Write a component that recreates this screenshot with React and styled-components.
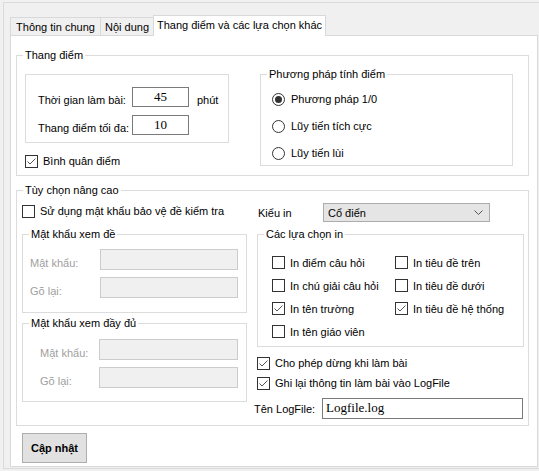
import React from 'react';
import styled, { createGlobalStyle } from 'styled-components';

const GlobalStyle = createGlobalStyle`
  html, body {
    margin: 0;
    padding: 0;
    background: #f0f0f0;
  }
  body {
    font-family: "Liberation Sans", Arial, sans-serif;
    font-size: 11px;
    color: #000;
  }
  * { box-sizing: border-box; }
`;

const CheckIcon = ({ checked }) => (
  <svg width="13" height="13" viewBox="0 0 13 13">
    <rect x="0.5" y="0.5" width="12" height="12" fill="#fff" stroke="#333" />
    {checked && <path d="M2.5 6.5 L5 9 L10.5 3.5" fill="none" stroke="#555" strokeWidth="1" />}
  </svg>
);

const RadioIcon = ({ checked }) => (
  <svg width="13" height="13" viewBox="0 0 13 13">
    <circle cx="6.5" cy="6.5" r="6" fill="#fff" stroke="#333" />
    {checked && <circle cx="6.5" cy="6.5" r="3.5" fill="#333" />}
  </svg>
);

const Chevron = () => (
  <svg width="9" height="5" viewBox="0 0 9 5">
    <path d="M0.5 0.5 L4.5 4.5 L8.5 0.5" fill="none" stroke="#555" />
  </svg>
);

export default function App() {
  return (
    <>
      <GlobalStyle />
      <Frame>
        <TabStrip>
          <Tab $width={91}>Thông tin chung</Tab>
          <Tab $width={53} $noLeft>Nội dung</Tab>
          <ActiveTab>Thang điểm và các lựa chọn khác</ActiveTab>
        </TabStrip>
        <Panel>
          <Group $width={513} $height={128} $mt={12} $ml={5}>
            <Legend>Thang điểm</Legend>
            <Row>
              <Column $ml={8} $mt={12}>
                <InnerBox>
                  <FieldRow>
                    <FieldLabel $width={94}>Thời gian làm bài:</FieldLabel>
                    <NumberInput>45</NumberInput>
                    <Unit>phút</Unit>
                  </FieldRow>
                  <FieldRow>
                    <FieldLabel $width={94}>Thang điểm tối đa:</FieldLabel>
                    <NumberInput>10</NumberInput>
                  </FieldRow>
                </InnerBox>
                <CheckRow $mt={8}>
                  <CheckIcon checked />
                  <span>Bình quân điểm</span>
                </CheckRow>
              </Column>
              <Group $width={253} $height={99} $mt={5} $ml={31}>
                <Legend>Phương pháp tính điểm</Legend>
                <RadioList>
                  <RadioRow>
                    <RadioIcon checked />
                    <span>Phương pháp 1/0</span>
                  </RadioRow>
                  <RadioRow>
                    <RadioIcon />
                    <span>Lũy tiến tích cực</span>
                  </RadioRow>
                  <RadioRow>
                    <RadioIcon />
                    <span>Lũy tiến lùi</span>
                  </RadioRow>
                </RadioList>
              </Group>
            </Row>
          </Group>

          <Group $width={513} $height={243} $mt={7} $ml={5}>
            <Legend>Tùy chọn nâng cao</Legend>
            <Row>
              <Column $ml={5} $width={225}>
                <CheckRow $mt={4}>
                  <CheckIcon />
                  <span>Sử dụng mật khẩu bảo vệ đề kiểm tra</span>
                </CheckRow>
                <Group $width={225} $height={86} $mt={6}>
                  <Legend>Mật khẩu xem đề</Legend>
                  <PasswordFields $pt={8} $pl={7}>
                    <FieldRow>
                      <FieldLabel $width={70} $disabled>Mật khẩu:</FieldLabel>
                      <DisabledInput $width={138} />
                    </FieldRow>
                    <FieldRow>
                      <FieldLabel $width={70} $disabled>Gõ lại:</FieldLabel>
                      <DisabledInput $width={138} />
                    </FieldRow>
                  </PasswordFields>
                </Group>
                <Group $width={225} $height={86} $mt={3}>
                  <Legend>Mật khẩu xem đầy đủ</Legend>
                  <PasswordFields $pt={9} $pl={17}>
                    <FieldRow>
                      <FieldLabel $width={59} $disabled>Mật khẩu:</FieldLabel>
                      <DisabledInput $width={139} />
                    </FieldRow>
                    <FieldRow>
                      <FieldLabel $width={59} $disabled>Gõ lại:</FieldLabel>
                      <DisabledInput $width={139} />
                    </FieldRow>
                  </PasswordFields>
                </Group>
              </Column>

              <Column $ml={7} $width={269}>
                <PrintStyleRow>
                  <FieldLabel $width={65} $center>Kiểu in</FieldLabel>
                  <Select>
                    <span>Cổ điển</span>
                    <Chevron />
                  </Select>
                </PrintStyleRow>
                <Group $width={267} $height={120} $mt={5} $ml={3}>
                  <Legend>Các lựa chọn in</Legend>
                  <OptionGrid>
                    <OptionItem><CheckIcon /><span>In điểm câu hỏi</span></OptionItem>
                    <OptionItem><CheckIcon /><span>In tiêu đề trên</span></OptionItem>
                    <OptionItem><CheckIcon /><span>In chú giải câu hỏi</span></OptionItem>
                    <OptionItem><CheckIcon /><span>In tiêu đề dưới</span></OptionItem>
                    <OptionItem><CheckIcon checked /><span>In tên trường</span></OptionItem>
                    <OptionItem><CheckIcon checked /><span>In tiêu đề hệ thống</span></OptionItem>
                    <OptionItem><CheckIcon /><span>In tên giáo viên</span></OptionItem>
                  </OptionGrid>
                </Group>
                <CheckRow $mt={6} $ml={3}>
                  <CheckIcon checked />
                  <span>Cho phép dừng khi làm bài</span>
                </CheckRow>
                <CheckRow $ml={3}>
                  <CheckIcon checked />
                  <span>Ghi lại thông tin làm bài vào LogFile</span>
                </CheckRow>
                <LogRow>
                  <FieldLabel $width={68} $center>Tên LogFile:</FieldLabel>
                  <TextInput>Logfile.log</TextInput>
                </LogRow>
              </Column>
            </Row>
          </Group>

          <UpdateButton>Cập nhật</UpdateButton>
        </Panel>
      </Frame>
    </>
  );
}

const Frame = styled.div`
  margin: 2px 0 0 3px;
  height: 467px;
  border-top: 1px solid #dadada;
  border-left: 1px solid #dadada;
  border-bottom: 1px solid #dadada;
  padding: 12px 0 0 6px;
`;

const TabStrip = styled.div`
  display: flex;
  align-items: flex-end;
  height: 20px;
`;

const Tab = styled.div`
  width: ${(p) => p.$width}px;
  height: 18px;
  border: 1px solid #d9d9d9;
  border-bottom: none;
  ${(p) => p.$noLeft && 'border-left: none;'}
  background: #f0f0f0;
  display: flex;
  align-items: center;
  justify-content: center;
  padding-top: 1px;
  white-space: nowrap;
`;

const ActiveTab = styled.div`
  position: relative;
  z-index: 1;
  width: 173px;
  height: 21px;
  margin-left: -1px;
  margin-bottom: -1px;
  border: 1px solid #d9d9d9;
  border-bottom: none;
  background: #fff;
  display: flex;
  align-items: center;
  justify-content: center;
  padding-bottom: 2px;
  white-space: nowrap;
`;

const Panel = styled.div`
  width: 528px;
  height: 432px;
  background: #fff;
  border: 1px solid #d9d9d9;
  display: flex;
  flex-direction: column;
  align-items: flex-start;
`;

const Group = styled.fieldset`
  margin: ${(p) => p.$mt || 0}px 0 0 ${(p) => p.$ml || 0}px;
  padding: 0;
  min-width: 0;
  width: ${(p) => p.$width}px;
  height: ${(p) => p.$height}px;
  border: 1px solid #dcdcdc;
  flex-shrink: 0;
`;

const Legend = styled.legend`
  margin-left: 6px;
  padding: 0 2px;
  font-size: 11px;
  line-height: 14px;
  white-space: nowrap;
`;

const Row = styled.div`
  display: flex;
  align-items: flex-start;
`;

const Column = styled.div`
  display: flex;
  flex-direction: column;
  align-items: flex-start;
  margin: ${(p) => p.$mt || 0}px 0 0 ${(p) => p.$ml || 0}px;
  ${(p) => p.$width && `width: ${p.$width}px;`}
  flex-shrink: 0;
`;

const InnerBox = styled.div`
  width: 204px;
  height: 69px;
  border: 1px solid #dcdcdc;
  padding: 12px 0 0 12px;
  display: flex;
  flex-direction: column;
  gap: 8px;
`;

const FieldRow = styled.div`
  display: flex;
  align-items: flex-end;
  white-space: nowrap;
`;

const FieldLabel = styled.span`
  width: ${(p) => p.$width}px;
  flex-shrink: 0;
  line-height: 14px;
  white-space: nowrap;
  color: ${(p) => (p.$disabled ? '#a0a0a0' : '#000')};
  ${(p) => p.$center && 'align-self: center;'}
`;

const NumberInput = styled.div`
  width: 57px;
  height: 20px;
  border: 1px solid #7a7a7a;
  background: #fff;
  font-family: "Liberation Serif", "Times New Roman", serif;
  font-size: 13px;
  line-height: 17px;
  text-align: center;
`;

const Unit = styled.span`
  margin-left: 8px;
  line-height: 14px;
`;

const CheckRow = styled.div`
  display: flex;
  align-items: center;
  gap: 5px;
  height: 20px;
  margin: ${(p) => p.$mt || 0}px 0 0 ${(p) => p.$ml || 0}px;
  white-space: nowrap;
  svg { flex-shrink: 0; }
`;

const RadioList = styled.div`
  display: flex;
  flex-direction: column;
  gap: 7px;
  padding: 8px 0 0 11px;
`;

const RadioRow = styled.div`
  display: flex;
  align-items: center;
  gap: 6px;
  height: 20px;
  white-space: nowrap;
`;

const PasswordFields = styled.div`
  display: flex;
  flex-direction: column;
  gap: 7px;
  padding: ${(p) => p.$pt}px 0 0 ${(p) => p.$pl}px;
`;

const DisabledInput = styled.div`
  width: ${(p) => p.$width}px;
  height: 21px;
  border: 1px solid #cccccc;
  background: #f0f0f0;
`;

const PrintStyleRow = styled.div`
  display: flex;
  align-items: center;
  margin-top: 6px;
  padding-left: 4px;
  height: 19px;
`;

const Select = styled.div`
  width: 167px;
  height: 19px;
  border: 1px solid #acacac;
  background: #e5e5e5;
  display: flex;
  align-items: center;
  justify-content: space-between;
  padding: 0 6px 0 4px;
`;

const OptionGrid = styled.div`
  display: grid;
  grid-template-columns: 123px auto;
  grid-auto-rows: 23px;
  padding: 10px 0 0 14px;
`;

const OptionItem = styled.div`
  display: flex;
  align-items: center;
  gap: 5px;
  white-space: nowrap;
`;

const LogRow = styled.div`
  display: flex;
  align-items: center;
  margin-top: 5px;
`;

const TextInput = styled.div`
  width: 201px;
  height: 21px;
  border: 1px solid #7a7a7a;
  background: #fff;
  padding-left: 3px;
  font-family: "Liberation Serif", "Times New Roman", serif;
  font-size: 13px;
  line-height: 18px;
`;

const UpdateButton = styled.button`
  margin: 7px 0 0 11px;
  width: 65px;
  height: 30px;
  border: 1px solid #adadad;
  background: #e1e1e1;
  font-family: "Liberation Sans", Arial, sans-serif;
  font-size: 11px;
  font-weight: bold;
  color: #000;
  padding: 0;
`;
